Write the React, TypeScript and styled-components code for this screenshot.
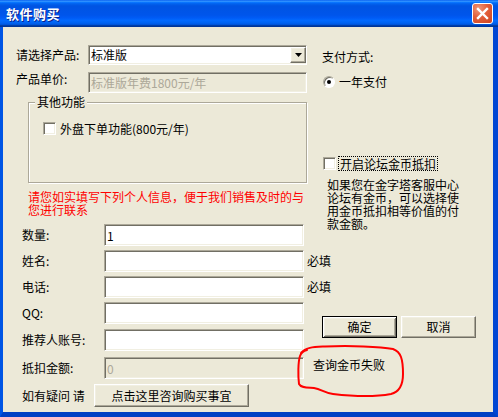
import React from "react";
import styled, { createGlobalStyle, css } from "styled-components";

const GlobalStyle = createGlobalStyle`
  html, body {
    margin: 0;
    padding: 0;
    background: #ffffff;
  }
  body {
    font-family: "Noto Sans CJK SC", "Noto Sans", sans-serif;
    font-size: 12px;
    color: #000000;
  }
`;

const sunken = css`
  border-style: solid;
  border-width: 1px;
  border-color: #aca899 #ffffff #ffffff #aca899;
  box-shadow: inset 1px 1px 0 #716f64, inset -1px -1px 0 #f1efe2;
`;

const raised = css`
  border-style: solid;
  border-width: 1px;
  border-color: #ffffff #716f64 #716f64 #ffffff;
  box-shadow: inset -1px -1px 0 #aca899, inset 1px 1px 0 #f1efe2;
`;

const fields = [
  { label: "数量:", value: "1", mt: 0 },
  { label: "姓名:", value: "", mt: 4, note: "必填" },
  { label: "电话:", value: "", mt: 4, note: "必填" },
  { label: "QQ:", value: "", mt: 4 },
  { label: "推荐人账号:", value: "", mt: 5 }
];

const App = () => {
  return (
    <>
      <GlobalStyle />
      <Window>
        <TitleBar>
          <Title>软件购买</Title>
          <CloseButton>
            <svg width="21" height="21" viewBox="0 0 21 21">
              <path
                d="M6 6 L15 15 M15 6 L6 15"
                stroke="#ffffff"
                strokeWidth="2.4"
                strokeLinecap="square"
              />
            </svg>
          </CloseButton>
        </TitleBar>
        <Body>
          <TopSection>
            <LeftPane>
              <FieldLine>
                <Label $pt={3}>请选择产品:</Label>
                <Select>
                  <SelectText>标准版</SelectText>
                  <DropButton>
                    <svg width="7" height="4" viewBox="0 0 7 4">
                      <polygon points="0,0 7,0 3.5,4" fill="#000" />
                    </svg>
                  </DropButton>
                </Select>
              </FieldLine>
              <FieldLine $mt={7}>
                <Label $pt={0}>产品单价:</Label>
                <TextBox
                  $w={219}
                  $h={21}
                  $disabled
                  readOnly
                  value="标准版年费1800元/年"
                />
              </FieldLine>
              <GroupBox>
                <Legend>其他功能</Legend>
                <CheckRow>
                  <CheckBox />
                  <CheckLabel>外盘下单功能(800元/年)</CheckLabel>
                </CheckRow>
              </GroupBox>
              <Notice>
                请您如实填写下列个人信息，便于我们销售及时的与
                <br />
                您进行联系
              </Notice>
            </LeftPane>
            <RightPane>
              <Caption>支付方式:</Caption>
              <RadioRow>
                <Radio />
                <span>一年支付</span>
              </RadioRow>
              <FocusRow>
                <CheckBox />
                <FocusText>开启论坛金币抵扣</FocusText>
              </FocusRow>
              <Hint>
                如果您在金字塔客服中心
                <br />
                论坛有金币，可以选择使
                <br />
                用金币抵扣相等价值的付
                <br />
                款金额。
              </Hint>
            </RightPane>
          </TopSection>
          <BottomSection>
            <Form>
              {fields.map((f, i) => (
                <Row key={i} $mt={f.mt}>
                  <FieldLabel>{f.label}</FieldLabel>
                  <TextBox $w={200} $h={22} readOnly value={f.value} />
                  {f.note && <Note $ml={3}>{f.note}</Note>}
                </Row>
              ))}
              <Row $mt={6}>
                <FieldLabel>抵扣金额:</FieldLabel>
                <TextBox $w={200} $h={22} $disabled readOnly value="0" />
                <Note $ml={9} $top>
                  查询金币失败
                  <Scribble width="110" height="54" viewBox="0 0 110 54">
                    <path
                      d="M6 9 C10 3, 20 3, 30 2.5 C55 1.5, 85 2.5, 98 5 C106 8, 108 15, 108 30 C108 42, 104 48, 96 50 C80 53, 55 52, 38 50 C30 49, 26 45, 19 44 C12 43.5, 6 44, 4 40 C3 32, 3 18, 5 12 C6 9, 8 7, 12 6"
                      fill="none"
                      stroke="#ff0000"
                      strokeWidth="2"
                      strokeLinecap="round"
                    />
                  </Scribble>
                </Note>
              </Row>
              <HelpRow>
                <HelpLabel>如有疑问 请</HelpLabel>
                <Button $w={155} $h={23}>
                  点击这里咨询购买事宜
                </Button>
              </HelpRow>
            </Form>
            <Side>
              <Button $w={75} $h={22} $primary>
                确定
              </Button>
              <Button $w={75} $h={22}>
                取消
              </Button>
            </Side>
          </BottomSection>
        </Body>
      </Window>
    </>
  );
};

const Window = styled.div`
  width: 498px;
  height: 417px;
  display: flex;
  flex-direction: column;
  overflow: hidden;
`;

const TitleBar = styled.div`
  flex: 0 0 27px;
  display: flex;
  align-items: center;
  justify-content: space-between;
  padding: 0 5px 0 6px;
  background: linear-gradient(
    to bottom,
    #0058ee 0%,
    #3593ff 4%,
    #288eff 6%,
    #127dff 8%,
    #036ffc 10%,
    #0262ee 14%,
    #0057e5 20%,
    #0054e3 24%,
    #0055eb 56%,
    #005bf5 66%,
    #026afe 76%,
    #0062ef 86%,
    #0052d6 92%,
    #0040ab 94%,
    #003092 100%
  );
`;

const Title = styled.span`
  color: #ffffff;
  font-weight: bold;
  font-size: 13px;
  line-height: 14px;
  letter-spacing: 0.5px;
  text-shadow: 1px 1px 0 #0a1e8c;
`;

const CloseButton = styled.div`
  width: 21px;
  height: 21px;
  box-sizing: border-box;
  border: 1px solid #ffffff;
  border-radius: 3px;
  display: flex;
  align-items: center;
  justify-content: center;
  background: radial-gradient(
    circle at 30% 25%,
    #f0977a 0%,
    #e35f3a 45%,
    #cc4220 100%
  );
  svg {
    margin: -1px;
  }
`;

const Body = styled.div`
  flex: 1;
  background: #ece9d8;
  border-left: 3px solid #0055e5;
  border-right: 5px solid #0046d3;
  border-bottom: 5px solid #0040c4;
  padding: 18px 0 0 13px;
  display: flex;
  flex-direction: column;
`;

const TopSection = styled.div`
  display: flex;
  height: 179px;
  flex-shrink: 0;
`;

const LeftPane = styled.div`
  width: 291px;
  display: flex;
  flex-direction: column;
`;

const FieldLine = styled.div<{ $mt?: number }>`
  display: flex;
  align-items: flex-start;
  margin-top: ${p => p.$mt || 0}px;
`;

const Label = styled.span<{ $pt: number }>`
  width: 72px;
  flex-shrink: 0;
  line-height: 14px;
  padding-top: ${p => p.$pt}px;
`;

const Select = styled.div`
  ${sunken};
  width: 219px;
  height: 20px;
  box-sizing: border-box;
  background: #ffffff;
  display: flex;
  align-items: center;
  padding-left: 2px;
`;

const SelectText = styled.span`
  flex: 1;
  line-height: 14px;
`;

const DropButton = styled.div`
  ${raised};
  width: 16px;
  height: 16px;
  box-sizing: border-box;
  background: #ece9d8;
  display: flex;
  align-items: center;
  justify-content: center;
`;

const TextBox = styled.input<{ $w: number; $h: number; $disabled?: boolean }>`
  ${sunken};
  width: ${p => p.$w}px;
  height: ${p => p.$h}px;
  box-sizing: border-box;
  flex-shrink: 0;
  margin: 0;
  padding: 0 2px;
  font-family: inherit;
  font-size: 12px;
  outline: none;
  background: ${p => (p.$disabled ? "#ece9d8" : "#ffffff")};
  color: ${p => (p.$disabled ? "#aca899" : "#000000")};
`;

const GroupBox = styled.div`
  position: relative;
  margin: 9px 0 0 12px;
  width: 279px;
  height: 81px;
  box-sizing: border-box;
  border: 1px solid #aca899;
  box-shadow: inset 1px 1px 0 #ffffff, 1px 1px 0 #ffffff;
  padding: 19px 0 0 14px;
`;

const Legend = styled.span`
  position: absolute;
  top: -8px;
  left: 6px;
  padding: 0 2px;
  background: #ece9d8;
  line-height: 14px;
`;

const CheckRow = styled.div`
  display: flex;
  align-items: center;
  gap: 4px;
  height: 13px;
`;

const CheckBox = styled.span`
  ${sunken};
  display: inline-block;
  width: 13px;
  height: 13px;
  box-sizing: border-box;
  background: #ffffff;
  flex-shrink: 0;
`;

const CheckLabel = styled.span`
  line-height: 13px;
`;

const Notice = styled.div`
  margin: 7px 0 0 12px;
  line-height: 13px;
  color: #ff0000;
  white-space: nowrap;
`;

const RightPane = styled.div`
  margin-left: 15px;
  display: flex;
  flex-direction: column;
`;

const Caption = styled.div`
  margin-top: 5px;
  line-height: 14px;
`;

const RadioRow = styled.div`
  margin-top: 11px;
  display: flex;
  align-items: center;
  gap: 4px;
  height: 13px;
  line-height: 13px;
  padding-left: 1px;
`;

const Radio = styled.span`
  position: relative;
  width: 12px;
  height: 12px;
  border-radius: 50%;
  box-sizing: border-box;
  border: 1px solid;
  border-color: #aca899 #ffffff #ffffff #aca899;
  box-shadow: inset 1px 1px 0 #716f64;
  background: #ffffff;
  &::after {
    content: "";
    position: absolute;
    left: 3px;
    top: 3px;
    width: 4px;
    height: 4px;
    border-radius: 50%;
    background: #000000;
  }
`;

const FocusRow = styled.div`
  margin-top: 68px;
  display: flex;
  align-items: center;
  gap: 2px;
  height: 15px;
  padding-left: 1px;
`;

const FocusText = styled.span`
  border: 1px dotted #000000;
  padding: 0 1px;
  line-height: 13px;
`;

const Hint = styled.div`
  margin: 7px 0 0 5px;
  line-height: 13px;
  white-space: nowrap;
`;

const BottomSection = styled.div`
  display: flex;
`;

const Form = styled.div`
  width: 300px;
  flex-shrink: 0;
  padding-left: 6px;
  display: flex;
  flex-direction: column;
`;

const Row = styled.div<{ $mt: number }>`
  display: flex;
  align-items: center;
  height: 22px;
  margin-top: ${p => p.$mt}px;
`;

const FieldLabel = styled.span`
  width: 82px;
  flex-shrink: 0;
  line-height: 14px;
`;

const Note = styled.span<{ $ml: number; $top?: boolean }>`
  position: relative;
  margin-left: ${p => p.$ml}px;
  white-space: nowrap;
  line-height: 14px;
  align-self: ${p => (p.$top ? "flex-start" : "center")};
  margin-top: ${p => (p.$top ? 1 : 0)}px;
`;

const Scribble = styled.svg`
  position: absolute;
  left: -18px;
  top: -14px;
  overflow: visible;
`;

const HelpRow = styled.div`
  display: flex;
  align-items: center;
  margin-top: 5px;
`;

const HelpLabel = styled.span`
  width: 72px;
  flex-shrink: 0;
  line-height: 14px;
`;

const Side = styled.div`
  margin-top: 92px;
  display: flex;
  gap: 4px;
  align-self: flex-start;
`;

const Button = styled.button<{ $w: number; $h: number; $primary?: boolean }>`
  width: ${p => p.$w}px;
  height: ${p => p.$h}px;
  box-sizing: border-box;
  margin: 0;
  padding: 0;
  background: #ece9d8;
  font-family: inherit;
  font-size: 12px;
  color: #000000;
  line-height: 14px;
  ${p =>
    p.$primary
      ? css`
          border: 1px solid #000000;
          box-shadow: inset 1px 1px 0 #ffffff, inset -1px -1px 0 #716f64,
            inset 2px 2px 0 #f1efe2, inset -2px -2px 0 #aca899;
        `
      : raised};
`;

export default App;
